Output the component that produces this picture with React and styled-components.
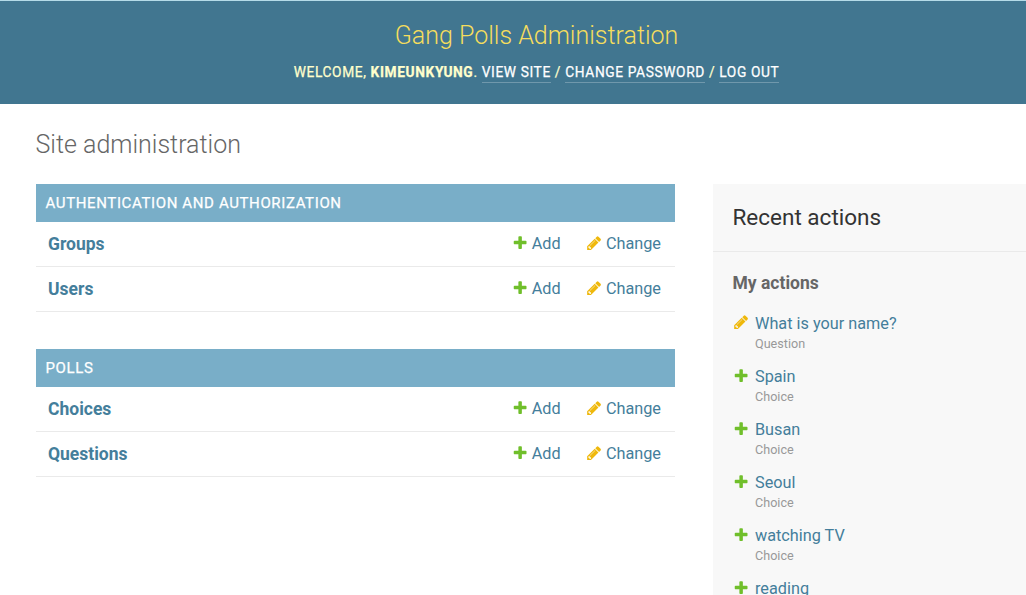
import React from "react";
import styled, { createGlobalStyle } from "styled-components";

const GlobalStyle = createGlobalStyle`
  *, *::before, *::after { box-sizing: border-box; }
  html, body { margin: 0; height: 100%; overflow: hidden; }
  body {
    background: #fff;
    color: #333;
    font-family: Roboto, "Liberation Sans", sans-serif;
    font-size: 16.25px;
  }
`;

const Page = styled.div`
  display: flex;
  flex-direction: column;
  height: 100vh;
  overflow: hidden;
`;

const Header = styled.header`
  flex: none;
  height: 104px;
  padding: 20px 0 0 47px;
  border-top: 1px solid #b5dbe8;
  background: #417690;
  display: flex;
  flex-direction: column;
  align-items: center;
`;

const SiteName = styled.h1`
  margin: 0;
  font-size: 25px;
  line-height: 30px;
  font-weight: 300;
  color: #f5dd5d;
  white-space: nowrap;
`;

const UserTools = styled.div`
  margin-top: 13px;
  font-size: 13.75px;
  line-height: 16px;
  font-weight: 400;
  letter-spacing: 0.615px;
  -webkit-text-stroke: 0.25px currentColor;
  text-transform: uppercase;
  color: #ffc;
  white-space: nowrap;
`;

const UserName = styled.strong`
  font-weight: 700;
`;

const ToolLink = styled.a`
  color: #fff;
  padding-bottom: 2px;
  border-bottom: 1px solid rgba(255, 255, 255, 0.25);
`;

const Content = styled.main`
  flex: 1;
  min-height: 0;
  padding: 25px 0 0 36px;
`;

const PageTitle = styled.h1`
  margin: 0 0 23px -0.5px;
  font-size: 25px;
  line-height: 32px;
  font-weight: 300;
  color: #666;
`;

const Columns = styled.div`
  display: flex;
  gap: 38px;
`;

const Main = styled.div`
  flex: none;
  width: 639px;
`;

const Module = styled.section`
  margin-bottom: 37px;
`;

const Caption = styled.h2`
  margin: 0;
  height: 38px;
  padding-left: 9.5px;
  font-size: 15px;
  line-height: 38px;
  font-weight: 400;
  letter-spacing: 0.625px;
  -webkit-text-stroke: 0.25px currentColor;
  text-transform: uppercase;
  color: #fff;
  background: #79aec8;
`;

const Row = styled.div`
  display: flex;
  align-items: center;
  height: 45px;
  padding: 0 14px 0 12px;
  border-bottom: 1px solid #eaeaea;
`;

const ModelName = styled.a`
  flex: 1;
  font-size: 17.5px;
  line-height: 22px;
  font-weight: 700;
  color: #447e9b;
`;

const RowLink = styled.a`
  display: flex;
  align-items: center;
  gap: ${(p) => (p.$spaced ? "4px" : "3px")};
  margin-left: ${(p) => (p.$spaced ? "25px" : "0")};
  line-height: 20px;
  color: #447e9b;
`;

const Sidebar = styled.aside`
  flex: 1;
  height: 640px;
  background: #f8f8f8;
`;

const SidebarTitle = styled.h2`
  margin: 0;
  height: 68px;
  padding-left: 19.5px;
  font-size: 22.5px;
  line-height: 66px;
  font-weight: 400;
  color: #333;
  border-bottom: 1px solid #eaeaea;
`;

const SidebarHeading = styled.h3`
  margin: 20px 0 19px 19.5px;
  font-size: 17.5px;
  line-height: 22px;
  font-weight: 700;
  color: #666;
`;

const ActionList = styled.ul`
  margin: 0;
  padding: 0 0 0 20px;
  list-style: none;
`;

const Action = styled.li`
  display: flex;
  align-items: flex-start;
  gap: 5.75px;
  height: 53px;
`;

const ActionText = styled.div`
  display: flex;
  flex-direction: column;
`;

const ActionLink = styled.a`
  line-height: 22px;
  color: #447e9b;
`;

const ActionType = styled.span`
  font-size: 12.6px;
  line-height: 18px;
  color: #999;
`;

const Icon = styled.svg`
  flex: none;
  display: block;
  width: 16.25px;
  height: 16.25px;
  margin-top: ${(p) => p.$top || "-1px"};
`;

function AddIcon({ top }) {
  return (
    <Icon viewBox="0 0 1792 1792" $top={top} aria-hidden="true">
      <path
        fill="#70bf2b"
        d="M1600 736v192q0 40-28 68t-68 28h-416v416q0 40-28 68t-68 28h-192q-40 0-68-28t-28-68v-416h-416q-40 0-68-28t-28-68v-192q0-40 28-68t68-28h416v-416q0-40 28-68t68-28h192q40 0 68 28t28 68v416h416q40 0 68 28t28 68z"
      />
    </Icon>
  );
}

function ChangeIcon({ top }) {
  return (
    <Icon viewBox="0 0 1792 1792" $top={top} aria-hidden="true">
      <path
        fill="#efb80b"
        d="M491 1536l91-91-235-235-91 91v107h128v128h107zm523-928q0-22-22-22-10 0-17 7l-542 542q-7 7-7 17 0 22 22 22 10 0 17-7l542-542q7-7 7-17zm-54-192l416 416-832 832h-416v-416zm683 96q0 53-37 90l-166 166-416-416 166-165q36-38 90-38 53 0 91 38l235 234q37 39 37 91z"
      />
    </Icon>
  );
}

const apps = [
  { name: "Authentication and Authorization", models: ["Groups", "Users"] },
  { name: "Polls", models: ["Choices", "Questions"] },
];

const actions = [
  { label: "What is your name?", type: "Question", changed: true },
  { label: "Spain", type: "Choice" },
  { label: "Busan", type: "Choice" },
  { label: "Seoul", type: "Choice" },
  { label: "watching TV", type: "Choice" },
  { label: "reading" },
];

export default function App() {
  return (
    <Page>
      <GlobalStyle />
      <Header>
        <SiteName>Gang Polls Administration</SiteName>
        <UserTools>
          Welcome, <UserName>kimeunkyung</UserName>. <ToolLink>View site</ToolLink> /{" "}
          <ToolLink>Change password</ToolLink> / <ToolLink>Log out</ToolLink>
        </UserTools>
      </Header>
      <Content>
        <PageTitle>Site administration</PageTitle>
        <Columns>
          <Main>
            {apps.map((app) => (
              <Module key={app.name}>
                <Caption>{app.name}</Caption>
                {app.models.map((model) => (
                  <Row key={model}>
                    <ModelName>{model}</ModelName>
                    <RowLink>
                      <AddIcon />
                      Add
                    </RowLink>
                    <RowLink $spaced>
                      <ChangeIcon />
                      Change
                    </RowLink>
                  </Row>
                ))}
              </Module>
            ))}
          </Main>
          <Sidebar>
            <SidebarTitle>Recent actions</SidebarTitle>
            <SidebarHeading>My actions</SidebarHeading>
            <ActionList>
              {actions.map((action) => (
                <Action key={action.label}>
                  {action.changed ? <ChangeIcon top="1px" /> : <AddIcon top="1.5px" />}
                  <ActionText>
                    <ActionLink>{action.label}</ActionLink>
                    {action.type && <ActionType>{action.type}</ActionType>}
                  </ActionText>
                </Action>
              ))}
            </ActionList>
          </Sidebar>
        </Columns>
      </Content>
    </Page>
  );
}
